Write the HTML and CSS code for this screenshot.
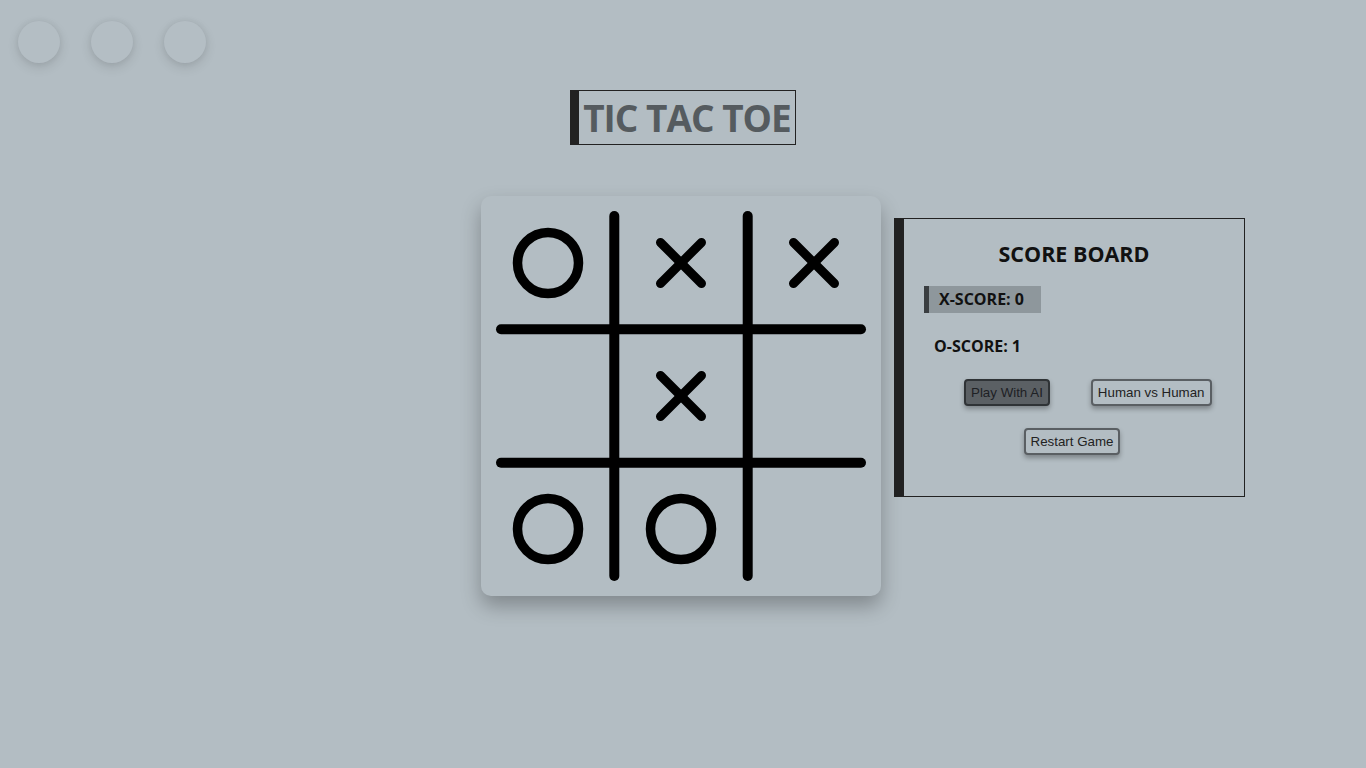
FILE: index.html
```html
<!DOCTYPE html>
<html lang="en">
<head>
<meta charset="utf-8">
<title>Tic Tac Toe</title>
<link rel="stylesheet" href="styles.css">
</head>
<body>
  <div class="dots">
    <span class="dot"></span>
    <span class="dot"></span>
    <span class="dot"></span>
  </div>

  <header class="title-wrap">
    <h1 class="title">TIC TAC TOE</h1>
  </header>

  <main class="main">
    <div class="spacer"></div>

    <div class="board">
      <svg class="grid-lines" width="400" height="400" viewBox="0 0 400 400">
        <g stroke="#000" stroke-width="10" stroke-linecap="round">
          <line x1="133.3" y1="20" x2="133.3" y2="380"/>
          <line x1="266.7" y1="20" x2="266.7" y2="380"/>
          <line x1="20" y1="133.3" x2="380" y2="133.3"/>
          <line x1="20" y1="266.7" x2="380" y2="266.7"/>
        </g>
      </svg>
      <div class="cell"><svg class="mark" viewBox="0 0 100 100"><circle cx="50" cy="50" r="30.5" fill="none" stroke="#000" stroke-width="9.5"/></svg></div>
      <div class="cell"><svg class="mark" viewBox="0 0 100 100"><g stroke="#000" stroke-width="9" stroke-linecap="round"><line x1="29.5" y1="29.5" x2="70.5" y2="70.5"/><line x1="70.5" y1="29.5" x2="29.5" y2="70.5"/></g></svg></div>
      <div class="cell"><svg class="mark" viewBox="0 0 100 100"><g stroke="#000" stroke-width="9" stroke-linecap="round"><line x1="29.5" y1="29.5" x2="70.5" y2="70.5"/><line x1="70.5" y1="29.5" x2="29.5" y2="70.5"/></g></svg></div>
      <div class="cell"></div>
      <div class="cell"><svg class="mark" viewBox="0 0 100 100"><g stroke="#000" stroke-width="9" stroke-linecap="round"><line x1="29.5" y1="29.5" x2="70.5" y2="70.5"/><line x1="70.5" y1="29.5" x2="29.5" y2="70.5"/></g></svg></div>
      <div class="cell"></div>
      <div class="cell"><svg class="mark" viewBox="0 0 100 100"><circle cx="50" cy="50" r="30.5" fill="none" stroke="#000" stroke-width="9.5"/></svg></div>
      <div class="cell"><svg class="mark" viewBox="0 0 100 100"><circle cx="50" cy="50" r="30.5" fill="none" stroke="#000" stroke-width="9.5"/></svg></div>
      <div class="cell"></div>
    </div>

    <section class="scoreboard">
      <h2 class="sb-title">SCORE BOARD</h2>
      <div class="score-row"><span class="score active">X-SCORE: 0</span></div>
      <div class="score-row"><span class="score">O-SCORE: 1</span></div>
      <div class="btn-row">
        <button class="btn btn-dark">Play With AI</button>
        <button class="btn">Human vs Human</button>
      </div>
      <div class="btn-row center">
        <button class="btn">Restart Game</button>
      </div>
    </section>
  </main>
</body>
</html>
```
FILE: styles.css
```css
* { box-sizing: border-box; }

html, body {
  margin: 0;
  background: #b3bdc3;
  height: 100%;
}

body {
  font-family: "Open Sans", "Noto Sans", sans-serif;
  color: #111;
}

.dots {
  display: flex;
  gap: 31px;
  padding: 21px 18px 0;
}

.dot {
  width: 42px;
  height: 42px;
  border-radius: 50%;
  background: #b4bec4;
  box-shadow: 0 4px 12px rgba(0, 0, 0, 0.12), 0 0 6px rgba(0, 0, 0, 0.06);
}

.title-wrap {
  text-align: center;
  margin-top: 27px;
}

.title {
  display: inline-block;
  margin: 0;
  font-size: 37px;
  font-weight: 700;
  letter-spacing: -1px;
  line-height: 53px;
  color: #555b5f;
  border: 1px solid #222;
  border-left: 9px solid #222;
  padding: 0 4px 0 4px;
}

.main {
  display: grid;
  grid-template-columns: 1fr 400px 1fr;
  margin-top: 51px;
  padding-right: 4px;
}

.board {
  position: relative;
  width: 400px;
  height: 400px;
  display: grid;
  grid-template-columns: repeat(3, 1fr);
  grid-template-rows: repeat(3, 1fr);
  background: #b3bdc3;
  border-radius: 10px;
  box-shadow: 0 10px 20px rgba(0, 0, 0, 0.28);
}

.grid-lines {
  position: absolute;
  left: 0;
  top: 0;
  pointer-events: none;
}

.cell {
  display: flex;
  align-items: center;
  justify-content: center;
}

.mark {
  width: 100px;
  height: 100px;
}

.scoreboard {
  align-self: start;
  margin: 22px 0 0 13px;
  width: 351px;
  height: 279px;
  border: 1px solid #222;
  border-left: 10px solid #222;
  padding-top: 20px;
}

.sb-title {
  margin: 0;
  text-align: center;
  font-size: 21.5px;
  font-weight: 700;
  line-height: 30px;
  color: #111;
}

.score-row {
  padding-left: 20px;
  margin-top: 17px;
}

.score-row + .score-row {
  margin-top: 20px;
}

.score {
  display: inline-block;
  font-size: 16px;
  font-weight: 700;
  line-height: 27px;
  padding: 0 17px 0 10px;
  color: #111;
}

.score.active {
  background: #8e979c;
  border-left: 5px solid #3a3e41;
}

.btn-row {
  display: flex;
  gap: 41px;
  padding-left: 60px;
  margin-top: 19px;
}

.btn-row.center {
  justify-content: center;
  padding-left: 0;
  padding-right: 4px;
  margin-top: 22px;
}

.btn {
  font-family: "Liberation Sans", Arial, sans-serif;
  font-size: 13.33px;
  line-height: 15px;
  padding: 4px 5px;
  color: #222;
  background: #b3bdc3;
  border: 2px solid #5a5f63;
  border-radius: 4px;
  box-shadow: 0 3px 5px rgba(0, 0, 0, 0.3);
}

.btn-dark {
  background: #5b6064;
  border-color: #2f3336;
  color: #1e2124;
}
```
